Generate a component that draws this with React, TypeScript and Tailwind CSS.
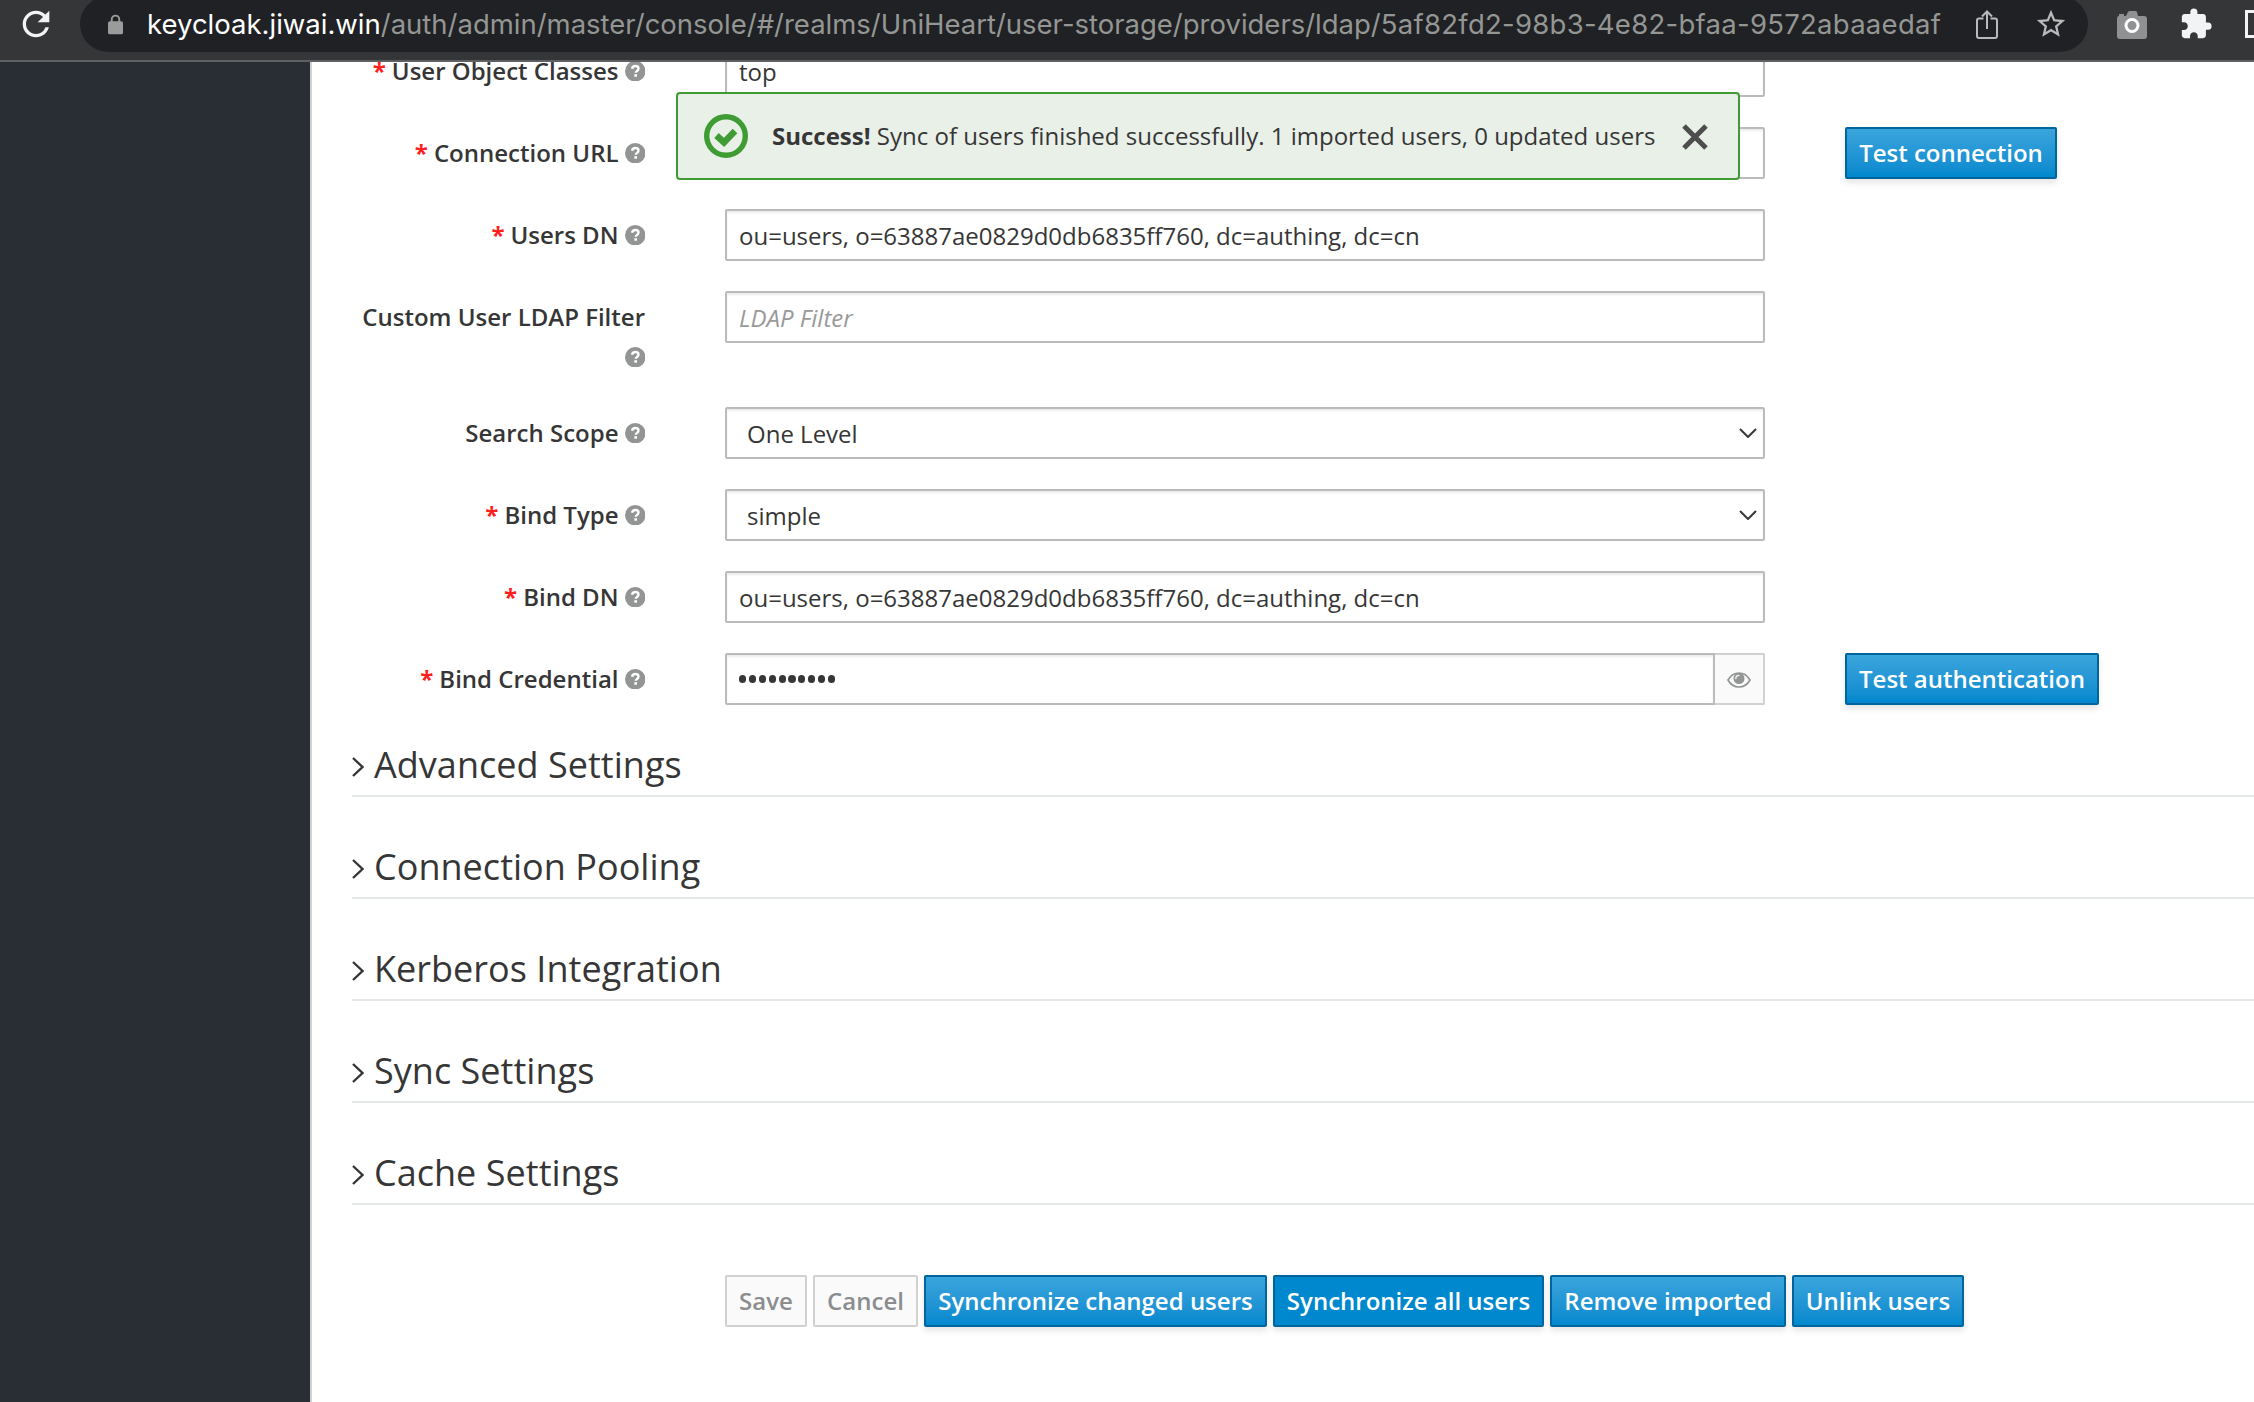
import React from 'react';
import { MdRefresh, MdStarBorder, MdExtension } from 'react-icons/md';

function HelpIcon() {
  return (
    <svg viewBox="0 0 20 20" className="h-[20.5px] w-[20.5px] shrink-0">
      <circle cx="10" cy="10" r="10" fill="#939594" />
      <path d="M6.9 7.6C7.2 5.7 8.4 4.9 10.1 4.9c1.8 0 3.1 1 3.1 2.5 0 1.3-.8 1.9-1.7 2.5-.7.5-1 .8-1 1.5" fill="none" stroke="#fff" strokeWidth="2.3" />
      <rect x="9.1" y="12.9" width="2.6" height="2.4" fill="#fff" />
    </svg>
  );
}

function EyeIcon() {
  return (
    <svg viewBox="0 0 24 16" className="mt-0.5 h-4 w-6">
      <path d="M1 8C3.500 3.500 7.500 1 12 1s8.500 2.500 11 7c-2.500 4.500-6.500 7-11 7S3.500 12.500 1 8z" fill="none" stroke="#939594" strokeWidth="1.600" />
      <circle cx="12" cy="6.500" r="5.500" fill="#939594" />
      <path d="M8.800 6.600a3.300 3.300 0 0 1 3.200-3.300" fill="none" stroke="#fafafa" strokeWidth="1.300" strokeLinecap="round" />
    </svg>
  );
}

type RowProps = {
  label: string;
  required?: boolean;
  wrapHelp?: boolean;
  action?: React.ReactNode;
  children: React.ReactNode;
};

function Row({ label, required, wrapHelp, action, children }: RowProps) {
  return (
    <div className={`flex items-start ${wrapHelp ? 'h-[86px]' : 'h-[52px]'}`}>
      <div className="mr-20 flex w-[293px] shrink-0 flex-col items-end pt-[6px] font-semibold">
        <div className="flex h-10 items-center whitespace-nowrap">
          {required && <span className="mr-[6px] font-bold text-[#ff1f1f]">*</span>}
          <span>{label}</span>
          {!wrapHelp && <span className="ml-[6px]"><HelpIcon /></span>}
        </div>
        {wrapHelp && <div className="flex h-10 items-center"><HelpIcon /></div>}
      </div>
      <div className="flex w-[1040px] shrink-0">{children}</div>
      {action && <div className="ml-20">{action}</div>}
    </div>
  );
}

function Field({ children, className = '' }: { children: React.ReactNode; className?: string }) {
  return (
    <div className={`flex h-[52px] flex-1 items-center rounded-[2px] border-2 border-[#bbb] bg-white pt-0.5 pl-3 shadow-[inset_0_2px_2px_rgba(3,3,3,0.075)] ${className}`}>
      {children}
    </div>
  );
}

function Select({ value }: { value: string }) {
  return (
    <Field className="justify-between pr-[6px] pl-5">
      <span>{value}</span>
      <svg viewBox="0 0 18 10" className="-mt-0.5 h-2.5 w-[18px]">
        <path d="M1 1l8 8 8-8" fill="none" stroke="#363636" strokeWidth="2" />
      </svg>
    </Field>
  );
}

function Button({ children, width, variant = 'primary' }: { children: string; width: string; variant?: 'primary' | 'active' | 'disabled' }) {
  const look = {
    primary: 'border-[#00659c] bg-linear-to-b from-[#39a5dc] to-[#0088ce] text-white shadow-[0_4px_6px_rgba(3,3,3,0.1)]',
    active: 'border-[#00659c] bg-[#0088ce] text-white shadow-[0_4px_6px_rgba(3,3,3,0.1)]',
    disabled: 'border-[#d1d1d1] bg-[#fafafa] text-[#8b8d8f]',
  }[variant];
  return (
    <button className={`flex h-[52px] items-center justify-center rounded-[2px] border-2 font-semibold whitespace-nowrap ${width} ${look}`}>
      {children}
    </button>
  );
}

const sections = ['Advanced Settings', 'Connection Pooling', 'Kerberos Integration', 'Sync Settings', 'Cache Settings'];

function Toolbar() {
  return (
    <header className="flex h-[62px] shrink-0 overflow-hidden border-b-2 border-[#5f6063] bg-[#353638]">
      <div className="flex h-12 w-20 shrink-0 items-center pl-4">
        <MdRefresh className="size-[40px] text-[#f1f3f4]" />
      </div>
      <div className="-mt-1 flex h-14 w-[2008px] shrink-0 items-center rounded-full bg-[#202124] pr-5 pl-7">
        <svg viewBox="0 0 16 21" className="h-[21px] w-4">
          <path d="M4 8V5a4 4 0 0 1 8 0v3" fill="none" stroke="#9a9c9b" strokeWidth="2" />
          <rect x="0" y="7" width="16" height="14" rx="2" fill="#9a9c9b" />
        </svg>
        <div className="ml-6 w-[1800px] shrink-0 font-[Inter] text-[27.5px] whitespace-nowrap text-[#949694]">
          <span className="text-white">keycloak.jiwai.win</span>
          <span className="tracking-[-0.01px]">/auth/admin/master/console/#/realms/UniHeart/user-storage/providers/ldap/</span>
          <span className="tracking-[0.27px]">5af82fd2-98b3-4e82-bfaa-9572abaaedaf</span>
        </div>
        <svg viewBox="0 0 22 29" className="ml-[29px] h-[29px] w-[22px] shrink-0" fill="none" stroke="#b9bbba" strokeWidth="2">
          <path d="M7.500 8.500H3a2 2 0 0 0-2 2V26a2 2 0 0 0 2 2h16a2 2 0 0 0 2-2V10.500a2 2 0 0 0-2-2h-4.500" />
          <path d="M11 19V2M6 6.500l5-5 5 5" />
        </svg>
        <MdStarBorder className="ml-[36px] size-[34px] shrink-0 text-[#b9bbba]" />
      </div>
      <div className="flex h-12 items-center">
        <svg viewBox="0 0 30 28" className="mt-0.5 ml-[29px] h-7 w-[30px] shrink-0">
          <path d="M2 5V3h5v2h2l2-4q.5-1 2-1h5q1.500 0 2 1l1 4h6q3 0 3 3v17q0 3-3 3H3q-3 0-3-3V8q0-3 2-3z" fill="#8f9192" />
          <circle cx="15" cy="14.500" r="6" fill="#8f9192" stroke="#fff" strokeWidth="3" />
        </svg>
        <MdExtension className="ml-[32px] size-[34px] shrink-0 text-[#f1f3f4]" />
        <div className="ml-8 h-7 w-8 shrink-0 border-[3px] border-[#f1f3f4]" />
      </div>
    </header>
  );
}

function Toast() {
  return (
    <div className="absolute top-[92px] left-[676px] flex h-[88px] w-[1064px] items-center rounded-[4px] border-2 border-[#3f9c35] bg-[#e9f0e8] pl-[26px]">
      <svg viewBox="0 0 44 44" className="size-11">
        <circle cx="22" cy="22" r="19.300" fill="none" stroke="#3f9c35" strokeWidth="5.400" />
        <path d="M12.500 21.500l7.500 7 11-11.500" fill="none" stroke="#3f9c35" strokeWidth="6.500" />
      </svg>
      <p className="ml-6 w-[886px] whitespace-nowrap">
        <strong className="font-bold">Success!</strong> Sync of users finished successfully. 1 imported users, 0 updated users
      </p>
      <svg viewBox="0 0 26 26" className="mt-px ml-6 size-[26px]">
        <path d="M2 2l22 22M24 2L2 24" stroke="#4d4d4d" strokeWidth="5" />
      </svg>
    </div>
  );
}

export default function App() {
  return (
    <div className="relative flex h-[1402px] w-[2254px] flex-col overflow-hidden bg-white font-['Open_Sans',sans-serif] text-[24px] leading-[40px] text-[#363636]">
      <Toolbar />
      <div className="flex min-h-0 flex-1 overflow-hidden">
        <aside className="w-[312px] shrink-0 border-r-2 border-[#d1d1d1] bg-[#292e34]" />
        <main className="flex-1 pl-10">
          <div className="-mt-[17px] flex flex-col gap-[30px]">
            <Row label="User Object Classes" required><Field>top</Field></Row>
            <Row label="Connection URL" required action={<Button width="w-[212px]">Test connection</Button>}>
              <Field>{null}</Field>
            </Row>
            <Row label="Users DN" required><Field>ou=users, o=63887ae0829d0db6835ff760, dc=authing, dc=cn</Field></Row>
            <Row label="Custom User LDAP Filter" wrapHelp>
              <Field><span className="text-[#999] italic">LDAP Filter</span></Field>
            </Row>
            <Row label="Search Scope"><Select value="One Level" /></Row>
            <Row label="Bind Type" required><Select value="simple" /></Row>
            <Row label="Bind DN" required><Field>ou=users, o=63887ae0829d0db6835ff760, dc=authing, dc=cn</Field></Row>
            <Row label="Bind Credential" required action={<Button width="w-[254px]">Test authentication</Button>}>
              <Field className="rounded-r-none">
                <span className="-mt-0.5 flex gap-[2.700px]">
                  {Array.from({ length: 10 }, (_, i) => <i key={i} className="size-[7.200px] rounded-full bg-[#363636]" />)}
                </span>
              </Field>
              <div className="flex w-[50px] items-center justify-center rounded-r-[2px] border-2 border-l-0 border-[#d1d1d1] bg-[#fafafa]">
                <EyeIcon />
              </div>
            </Row>
          </div>
          <div className="mt-[30px] flex flex-col gap-[40px]">
            {sections.map((title) => (
              <h2 key={title} className="flex h-[62px] items-center border-b-2 border-[#e3e8e6] text-[36px]">
                <svg viewBox="0 0 12 20" className="mt-[3px] h-5 w-3">
                  <path d="M1 1l9.500 9L1 19" fill="none" stroke="#363636" strokeWidth="2.400" />
                </svg>
                <span className="ml-2.5 tracking-[0.03px]">{title}</span>
              </h2>
            ))}
          </div>
          <div className="mt-[70px] ml-[373px] flex gap-1.5">
            <Button width="w-[82px]" variant="disabled">Save</Button>
            <Button width="w-[105px]" variant="disabled">Cancel</Button>
            <Button width="w-[343px]">Synchronize changed users</Button>
            <Button width="w-[271px]" variant="active">Synchronize all users</Button>
            <Button width="w-[236px]">Remove imported</Button>
            <Button width="w-[172px]">Unlink users</Button>
          </div>
        </main>
      </div>
      <Toast />
    </div>
  );
}
